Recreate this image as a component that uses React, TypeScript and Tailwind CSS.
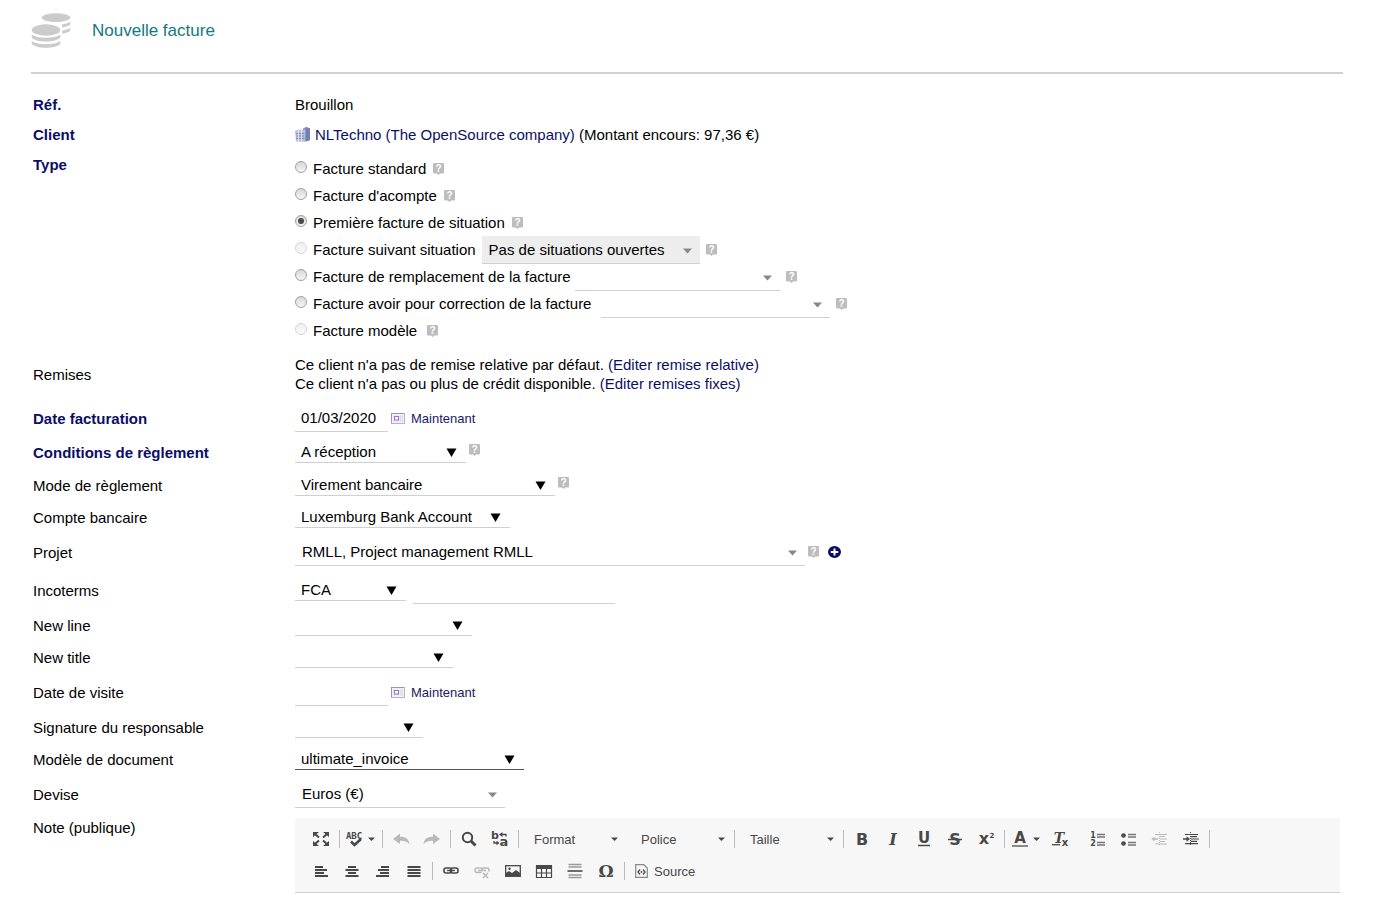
import React from 'react';

interface FieldProps {
    label: string;
    htmlFor?: string;
    required?: boolean;
    className?: string;
    children?: React.ReactNode;
}

const Field: React.FC<FieldProps> = ({ label, htmlFor, required, className = 'h-8', children }) => (
    <div className={`flex items-center ${className}`}>
        <label htmlFor={htmlFor} className={`w-[262px] shrink-0 ${required ? 'font-bold text-[#0a0f64]' : ''}`}>
            {label}
        </label>
        {children}
    </div>
);

interface NativeSelectProps {
    id: string;
    value?: string;
    width: string;
    line?: string;
}

// plain browser select, black arrow
const NativeSelect: React.FC<NativeSelectProps> = ({ id, value = '', width, line = 'border-[#d0d0d0]' }) => (
    <div className={`relative ${width}`}>
        <select id={id} className={`block h-[22px] w-full appearance-none border-b bg-transparent pl-[6px] ${line}`}>
            <option>{value}</option>
        </select>
        <svg className="pointer-events-none absolute right-[9px] top-[7px]" width="11" height="9" viewBox="0 0 11 9">
            <path d="M0.5 0.5h10L5.5 9z" fill="#000" />
        </svg>
    </div>
);

interface ComboProps {
    id: string;
    value?: string;
    width: string;
    label?: string;
    disabled?: boolean;
}

// searchable combo, small grey arrow
const Combo: React.FC<ComboProps> = ({ id, value = '', width, label, disabled }) => (
    <div className={`relative ${width}`}>
        <select
            id={id}
            aria-label={label}
            disabled={disabled}
            className={`block h-7 w-full appearance-none border-b border-[#d0d0d0] pl-[7px] text-black opacity-100 ${disabled ? 'bg-[#ededed]' : 'bg-transparent'}`}
        >
            <option>{value}</option>
        </select>
        <svg className="pointer-events-none absolute right-2 top-3" width="9" height="6" viewBox="0 0 9 6">
            <path d="M0 0.5h9L4.500 5.500z" fill="#888" />
        </svg>
    </div>
);

const HelpIcon: React.FC<{ className?: string }> = ({ className = '' }) => (
    <svg className={`shrink-0 overflow-visible ${className}`} width="11" height="12" viewBox="0 0 11 12">
        <path d="M1 0h9a1 1 0 0 1 1 1v8.500a1 1 0 0 1-1 1H7L5.500 12 4 10.500H1a1 1 0 0 1-1-1V1a1 1 0 0 1 1-1z" fill="#bdbdbd" />
        <text x="5.500" y="8.700" textAnchor="middle" fontFamily="Liberation Sans" fontSize="10" fontWeight="700" fill="#fff">?</text>
    </svg>
);

interface TypeOptionProps {
    id: string;
    label: string;
    checked?: boolean;
    disabled?: boolean;
    children?: React.ReactNode;
}

const TypeOption: React.FC<TypeOptionProps> = ({ id, label, checked, disabled, children }) => (
    <div className="flex h-[27px] items-center">
        <input
            id={id}
            type="radio"
            name="type"
            defaultChecked={checked}
            disabled={disabled}
            className="mb-[3px] mr-[6px] grid size-3 shrink-0 appearance-none place-items-center rounded-full border border-[#a0a0a0] bg-linear-to-b from-[#d8d8d8] to-[#f4f4f4] before:size-[6px] before:rounded-full checked:before:bg-[#4a4a4a] disabled:border-[#d4d4d4] disabled:from-[#f0f0f0] disabled:to-[#fafafa]"
        />
        <label htmlFor={id}>{label}</label>
        {children}
    </div>
);

const DateField: React.FC<{ id: string; value?: string }> = ({ id, value }) => (
    <>
        <input id={id} type="text" defaultValue={value} className="h-7 w-[93px] border-b border-[#d0d0d0] pl-[6px]" />
        <button type="button" aria-label="Calendrier" className="ml-[3px]">
            <svg width="14" height="11" viewBox="0 0 14 11">
                <rect x="0.500" y="0.500" width="13" height="10" fill="#f3f2f8" stroke="#b5b5c0" />
                <path d="M0 0.500h13M0.500 0v10" stroke="#8f92e0" />
                <path d="M3.500 2v7M6.500 2v7M9.500 2v7M11.500 2v7M2 3.500h10M2 5.500h10M2 7.500h10" stroke="#d8d8e2" strokeWidth="0.700" />
                <rect x="3.500" y="3.500" width="4" height="3.500" fill="#fff" stroke="#a274c4" />
            </svg>
        </button>
        <button type="button" className="ml-[6px] text-[13px] text-[#1a2060]">Maintenant</button>
    </>
);

const Separator = () => (
    <span className="flex w-[6px] shrink-0 justify-center">
        <span className="h-[18px] w-px bg-[#bcbcbc]" />
    </span>
);

interface ToolProps {
    label: string;
    faded?: boolean;
    wide?: boolean;
    children?: React.ReactNode;
}

const Tool: React.FC<ToolProps> = ({ label, faded, wide, children }) => (
    <button
        type="button"
        aria-label={label}
        className={`flex h-7 shrink-0 items-center ${wide ? 'w-[37px] gap-1 pl-1' : 'w-[31px] justify-center'} ${faded ? 'opacity-35' : ''}`}
    >
        <svg className="overflow-visible" width="18" height="16" viewBox="0 0 18 16" fill="none" stroke="#484848" strokeWidth="2">
            {children}
        </svg>
        {wide && <Caret />}
    </button>
);

const Caret: React.FC<{ className?: string }> = ({ className = '' }) => (
    <svg className={className} width="7" height="4" viewBox="0 0 7 4">
        <path d="M0 0.500h7L3.500 4z" fill="#484848" />
    </svg>
);

const ToolSelect: React.FC<{ label: string }> = ({ label }) => (
    <div className="relative w-[103px] shrink-0">
        <select aria-label={label} className="block h-7 w-full appearance-none bg-transparent pl-[13px] text-[13px] text-[#484848]">
            <option>{label}</option>
        </select>
        <Caret className="pointer-events-none absolute right-[6px] top-3" />
    </div>
);

interface GlyphProps {
    x?: number;
    y?: number;
    size?: number;
    family?: string;
    weight?: number;
    italic?: boolean;
    children: string;
}

const Glyph: React.FC<GlyphProps> = ({ x = 9, y = 14, size = 16, family = 'DejaVu Sans', weight = 700, italic, children }) => (
    <text
        x={x}
        y={y}
        textAnchor="middle"
        fontFamily={family}
        fontSize={size}
        fontWeight={weight}
        fontStyle={italic ? 'italic' : 'normal'}
        fill="#484848"
        stroke="none"
    >
        {children}
    </text>
);

const EditorToolbar = () => (
    <div className="min-w-0 flex-1 border-b border-[#d1d1d1] bg-[#f7f7f7] py-[5px] pl-[10px]">
        <div className="flex h-8 items-center">
            <Tool label="Agrandir">
                <path d="M3 3l4 3.500M15 3l-4 3.500M3 13l4-3.500M15 13l-4-3.500" />
                <path d="M1 1h6L1 6zM17 1h-6l6 5zM1 15h6l-6-5zM17 15h-6l6-5z" fill="#484848" stroke="none" />
            </Tool>
            <Separator />
            <Tool label="Orthographe" wide>
                <Glyph x={8} y={8} size={9} family="DejaVu Sans Mono">ABC</Glyph>
                <path d="M5 10.500l3.500 3.500L15 8" strokeWidth="2.500" />
            </Tool>
            <Separator />
            <Tool label="Annuler" faded>
                <path d="M1 8l7-5.500v3.200c6 0 9 2.300 9.500 7.800-2-3-5-3.700-9.500-3.700v3.200z" fill="#484848" stroke="none" />
            </Tool>
            <Tool label="Rétablir" faded>
                <path d="M17 8l-7-5.500v3.200C4 5.700 1 8 .5 13.500c2-3 5-3.700 9.500-3.700v3.200z" fill="#484848" stroke="none" />
            </Tool>
            <Separator />
            <Tool label="Rechercher">
                <circle cx="7.500" cy="6.500" r="4.700" />
                <path d="M11 10l4.500 4.500" strokeWidth="3" />
            </Tool>
            <Tool label="Remplacer">
                <Glyph x={4} y={8} size={11}>b</Glyph>
                <Glyph x={13} y={15} size={13}>a</Glyph>
                <path d="M10 3.500h5v2M3 10v2h3" strokeWidth="1.300" />
                <path d="M8 3.500l3.500-2.500v5zM8.500 12L5.500 9.700v4.600z" fill="#484848" stroke="none" />
            </Tool>
            <Separator />
            <div className="flex gap-1">
                <ToolSelect label="Format" />
                <ToolSelect label="Police" />
            </div>
            <Separator />
            <ToolSelect label="Taille" />
            <Separator />
            <Tool label="Gras">
                <Glyph>B</Glyph>
            </Tool>
            <Tool label="Italique">
                <Glyph family="DejaVu Serif" italic>I</Glyph>
            </Tool>
            <Tool label="Souligné">
                <Glyph y={12} size={15}>U</Glyph>
                <path d="M3 14.500h12" strokeWidth="1.500" />
            </Tool>
            <Tool label="Barré">
                <Glyph>S</Glyph>
                <path d="M2 8.500h14" strokeWidth="1.500" />
            </Tool>
            <Tool label="Exposant">
                <Glyph x={7} y={13}>x</Glyph>
                <Glyph x={15} y={7} size={7}>2</Glyph>
            </Tool>
            <Separator />
            <Tool label="Couleur de texte" wide>
                <Glyph y={12} size={15}>A</Glyph>
                <path d="M1 15h16" stroke="#8a8a8a" />
            </Tool>
            <Tool label="Supprimer la mise en forme">
                <Glyph x={8} y={12} size={14} family="DejaVu Serif" italic>T</Glyph>
                <path d="M1 13.700h8" strokeWidth="1.300" />
                <Glyph x={14} y={15} size={10}>x</Glyph>
            </Tool>
            <div className="ml-[7px] flex items-center">
                <Tool label="Liste numérotée">
                    <Glyph x={4} y={7} size={8}>1</Glyph>
                    <Glyph x={4} y={15} size={8}>2</Glyph>
                    <path d="M8 3.500h8M8 6h8M8 11.500h8M8 14h8" stroke="#777" strokeWidth="1.400" />
                </Tool>
                <Tool label="Liste à puces">
                    <circle cx="3.500" cy="4.500" r="2.300" fill="#484848" stroke="none" />
                    <circle cx="3.500" cy="12.500" r="2.300" fill="#484848" stroke="none" />
                    <path d="M8 3.500h8M8 6h8M8 11.500h8M8 14h8" stroke="#777" strokeWidth="1.400" />
                </Tool>
                <Tool label="Diminuer le retrait" faded>
                    <path d="M4 3.500h12M9 5.500h5M9 8h7M9 10.500h5M4 13h12" strokeWidth="1.200" />
                    <path d="M8.500 1v14" strokeWidth="1" strokeDasharray="1 1" />
                    <path d="M2 8h5" strokeWidth="1.500" />
                    <path d="M0.500 8l3-2.500v5z" fill="#484848" stroke="none" />
                </Tool>
                <Tool label="Augmenter le retrait">
                    <path d="M3 3.500h13M9 5.700h6M9 8h8M9 10.300h6M3 12.700h13" strokeWidth="1.200" />
                    <path d="M8.500 1v14" strokeWidth="1" strokeDasharray="1 1" />
                    <path d="M1 8h5" strokeWidth="1.500" />
                    <path d="M8 8L4.500 5.300v5.400z" fill="#484848" stroke="none" />
                </Tool>
            </div>
            <Separator />
        </div>
        <div className="flex h-8 items-center">
            <Tool label="Aligner à gauche">
                <path d="M3 4h8M3 7h12M3 10h9M3 13h13" />
            </Tool>
            <Tool label="Centrer">
                <path d="M5 4h8M2.500 7h13M5 10h8M2.500 13h13" />
            </Tool>
            <Tool label="Aligner à droite">
                <path d="M7 4h8M4 7h11M6 10h9M2 13h13" />
            </Tool>
            <Tool label="Justifier">
                <path d="M2.500 4h13M2.500 7h13M2.500 10h13M2.500 13h13" />
            </Tool>
            <Separator />
            <Tool label="Lien">
                <rect x="2" y="5" width="7.500" height="5" rx="2" strokeWidth="1.600" />
                <rect x="8.500" y="5" width="7.500" height="5" rx="2" strokeWidth="1.600" />
                <path d="M5 7.500h8" strokeWidth="1.300" />
            </Tool>
            <Tool label="Supprimer le lien" faded>
                <path d="M8.500 9.500H4a2 2 0 0 1-2-2V7a2 2 0 0 1 2-2h3.500a2 2 0 0 1 2 2v1M9 8V7a2 2 0 0 1 2-2h3a2 2 0 0 1 2 2v1.500M5 7.500h8" strokeWidth="1.500" />
                <path d="M10 10l5 5M15 10l-5 5" strokeWidth="1.500" />
            </Tool>
            <Tool label="Image">
                <rect x="1.700" y="2.700" width="14.600" height="10.600" strokeWidth="1.300" />
                <path d="M2 13v-3l3-2 3 2 4-3 4 3v3z" fill="#484848" stroke="none" />
                <circle cx="5.500" cy="5.700" r="1.200" fill="#484848" stroke="none" />
            </Tool>
            <Tool label="Tableau">
                <path d="M1 2h16v4H1z" fill="#484848" stroke="none" />
                <path d="M1.500 2v12.500h15V2M1 10h16M6.500 5v9M11.500 5v9" strokeWidth="1.200" />
            </Tool>
            <Tool label="Ligne horizontale">
                <path d="M2.500 1.500h13M2.500 4h13M2.500 12h13M2.500 14.500h13" stroke="#9a9a9a" strokeWidth="1.500" />
                <path d="M1.500 8h15" strokeWidth="1.600" />
            </Tool>
            <Tool label="Caractère spécial">
                <Glyph y={14} size={17} family="DejaVu Serif">Ω</Glyph>
            </Tool>
            <Separator />
            <button type="button" className="flex items-center gap-[6px] pl-2 text-[13px] text-[#484848]">
                <svg width="13" height="14" viewBox="0 0 13 14" fill="none" stroke="#555">
                    <path d="M0.700 0.700h8L12.300 4v9.300H0.700z" stroke="#888" strokeWidth="1.200" />
                    <path d="M5 5.500L3 8l2 2.500M8 5.500l2 2.500-2 2.500" strokeWidth="1.400" />
                    <circle cx="6.500" cy="8" r="0.900" fill="#555" stroke="none" />
                </svg>
                Source
            </button>
        </div>
    </div>
);

const CoinsIcon = () => (
    <svg width="40" height="35" viewBox="0 0 40 35" fill="#cbcbcb">
        <ellipse cx="25" cy="4.600" rx="14.300" ry="4.400" />
        <path d="M30.500 11.500c3.500-.5 7-1.500 8.800-3v2.700c-1.300 1.700-4.600 2.700-8 3.300 0-1.200-.2-2.100-.8-3z" />
        <path d="M31.300 17.500c3.300-.5 6.300-1.500 8-2.800v2.700c-1.300 1.700-4.600 2.700-8 3.300z" />
        <ellipse cx="15" cy="17" rx="14.300" ry="5.700" />
        <path d="M.7 21.500c3 2.300 8.300 3.300 14.300 3.300s11.300-1 14.300-3.300v3c-2 2.500-7.500 4-14.300 4s-12.300-1.500-14.300-4z" />
        <path d="M.7 28c3 2.300 8.300 3.300 14.300 3.300s11.300-1 14.300-3.300v2.700c-2 2.500-7.500 4-14.300 4s-12.300-1.500-14.300-4z" />
    </svg>
);

const CompanyIcon = () => (
    <svg width="15" height="15" viewBox="0 0 15 15">
        <path d="M8 1.500L11 0l4 1.500V13l-4 1.500-3-1z" fill="#8d97c4" />
        <path d="M11 0l4 1.500V13l-4 1.500z" fill="#7480b4" />
        <path d="M0 4l3-1.500L10 3v12l-9-.5z" fill="#bcc3de" />
        <path d="M1 6.500h8.500M1 9h8.500M1 11.500h8.500" stroke="#8089b5" />
        <path d="M3.500 3v11.500M6.500 3v11.500" stroke="#eef0f8" strokeWidth="0.800" />
    </svg>
);

const App = () => (
    <main className="bg-white px-[31px] font-['Liberation_Sans',Arial,sans-serif] text-[15px] leading-[19px] text-black">
        <header className="flex h-[74px] items-center gap-[21px] border-b-2 border-[#d2d2d2] pb-3">
            <CoinsIcon />
            <h1 className="text-[17px] text-[#14787f]">Nouvelle facture</h1>
        </header>

        <form className="pl-[2px] pr-[3px] pt-[15px]">
            <Field label="Réf." required className="h-[30px]">Brouillon</Field>
            <Field label="Client" required className="h-[30px]">
                <CompanyIcon />
                <p className="ml-[5px]">
                    <a href="#client" className="text-[#0a0f64]">NLTechno (The OpenSource company)</a> (Montant encours: 97,36 €)
                </p>
            </Field>

            <div className="flex h-[198px] pt-[6px]">
                <span className="w-[262px] shrink-0 font-bold text-[#0a0f64]">Type</span>
                <div>
                    <TypeOption id="standard" label="Facture standard">
                        <HelpIcon className="ml-[7px]" />
                    </TypeOption>
                    <TypeOption id="acompte" label="Facture d'acompte">
                        <HelpIcon className="ml-[7px]" />
                    </TypeOption>
                    <TypeOption id="situation" label="Première facture de situation" checked>
                        <HelpIcon className="ml-[7px]" />
                    </TypeOption>
                    <TypeOption id="suivante" label="Facture suivant situation" disabled>
                        <div className="ml-[6px]">
                            <Combo id="situations" label="Situations" value="Pas de situations ouvertes" width="w-[218px]" disabled />
                        </div>
                        <HelpIcon className="ml-[6px]" />
                    </TypeOption>
                    <TypeOption id="remplacement" label="Facture de remplacement de la facture">
                        <div className="ml-1">
                            <Combo id="facture-remplacee" label="Facture remplacée" width="w-[205px]" />
                        </div>
                        <HelpIcon className="ml-[6px]" />
                    </TypeOption>
                    <TypeOption id="avoir" label="Facture avoir pour correction de la facture">
                        <div className="ml-[10px]">
                            <Combo id="facture-corrigee" label="Facture corrigée" width="w-[229px]" />
                        </div>
                        <HelpIcon className="ml-[6px]" />
                    </TypeOption>
                    <TypeOption id="modele" label="Facture modèle" disabled>
                        <HelpIcon className="ml-[10px]" />
                    </TypeOption>
                </div>
            </div>

            <Field label="Remises" className="h-[54px]">
                <div>
                    <p>Ce client n'a pas de remise relative par défaut. <a href="#remise-relative" className="text-[#0a0f64]">(Editer remise relative)</a></p>
                    <p>Ce client n'a pas ou plus de crédit disponible. <a href="#remises-fixes" className="text-[#0a0f64]">(Editer remises fixes)</a></p>
                </div>
            </Field>
            <Field label="Date facturation" htmlFor="date" required className="h-[34px]">
                <DateField id="date" value="01/03/2020" />
            </Field>
            <Field label="Conditions de règlement" htmlFor="conditions" required className="h-[34px]">
                <NativeSelect id="conditions" value="A réception" width="w-[171px]" />
                <HelpIcon className="mb-1 ml-[3px]" />
            </Field>
            <Field label="Mode de règlement" htmlFor="mode">
                <NativeSelect id="mode" value="Virement bancaire" width="w-[260px]" />
                <HelpIcon className="mb-1 ml-[3px]" />
            </Field>
            <Field label="Compte bancaire" htmlFor="compte">
                <NativeSelect id="compte" value="Luxemburg Bank Account" width="w-[215px]" />
            </Field>
            <Field label="Projet" htmlFor="projet" className="h-[38px]">
                <Combo id="projet" value="RMLL, Project management RMLL" width="w-[510px]" />
                <HelpIcon className="ml-[3px]" />
                <button type="button" aria-label="Créer un projet" className="ml-[9px]">
                    <svg width="13" height="12" viewBox="0 0 13 12">
                        <ellipse cx="6.500" cy="6" rx="6.500" ry="6" fill="#0a0f64" />
                        <path d="M6.500 2.500v7M2.800 6h7.400" stroke="#fff" strokeWidth="2" />
                    </svg>
                </button>
            </Field>
            <Field label="Incoterms" htmlFor="incoterms" className="h-[38px]">
                <NativeSelect id="incoterms" value="FCA" width="w-[111px]" />
                <input type="text" aria-label="Lieu" className="ml-[7px] h-7 w-[202px] border-b border-[#d0d0d0]" />
            </Field>
            <Field label="New line" htmlFor="new-line">
                <NativeSelect id="new-line" width="w-[177px]" />
            </Field>
            <Field label="New title" htmlFor="new-title">
                <NativeSelect id="new-title" width="w-[158px]" />
            </Field>
            <Field label="Date de visite" htmlFor="visite" className="h-[38px]">
                <DateField id="visite" />
            </Field>
            <Field label="Signature du responsable" htmlFor="signature">
                <NativeSelect id="signature" width="w-[128px]" />
            </Field>
            <Field label="Modèle de document" htmlFor="document">
                <NativeSelect id="document" value="ultimate_invoice" width="w-[229px]" line="border-[#555]" />
            </Field>
            <Field label="Devise" htmlFor="devise" className="h-[38px]">
                <Combo id="devise" value="Euros (€)" width="w-[210px]" />
            </Field>
            <div className="flex pt-[5px]">
                <span className="w-[262px] shrink-0">Note (publique)</span>
                <EditorToolbar />
            </div>
        </form>
    </main>
);

export default App;
